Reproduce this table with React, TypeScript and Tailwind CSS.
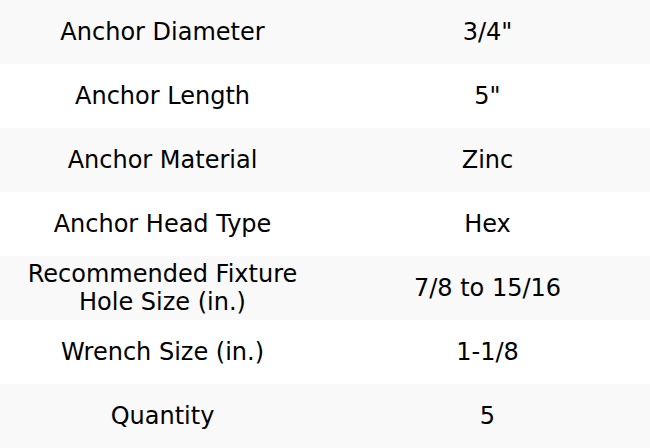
import React from "react";

const rows: [string, string][] = [
  ["Anchor Diameter", '3/4"'],
  ["Anchor Length", '5"'],
  ["Anchor Material", "Zinc"],
  ["Anchor Head Type", "Hex"],
  ["Recommended Fixture Hole Size (in.)", "7/8 to 15/16"],
  ["Wrench Size (in.)", "1-1/8"],
  ["Quantity", "5"],
];

export default function App() {
  return (
    <div className="w-[650px] h-[448px] bg-white text-black text-[24px] leading-[28px]" style={{ fontFamily: '"DejaVu Sans", sans-serif' }}>
      {rows.map(([k, v], i) => (
        <div key={k} className={`grid grid-cols-2 h-[64px] items-center text-center ${i % 2 === 0 ? "bg-[#f9f9f9]" : "bg-white"}`}>
          <div className="px-3">{k}</div>
          <div className="px-3">{v}</div>
        </div>
      ))}
    </div>
  );
}
